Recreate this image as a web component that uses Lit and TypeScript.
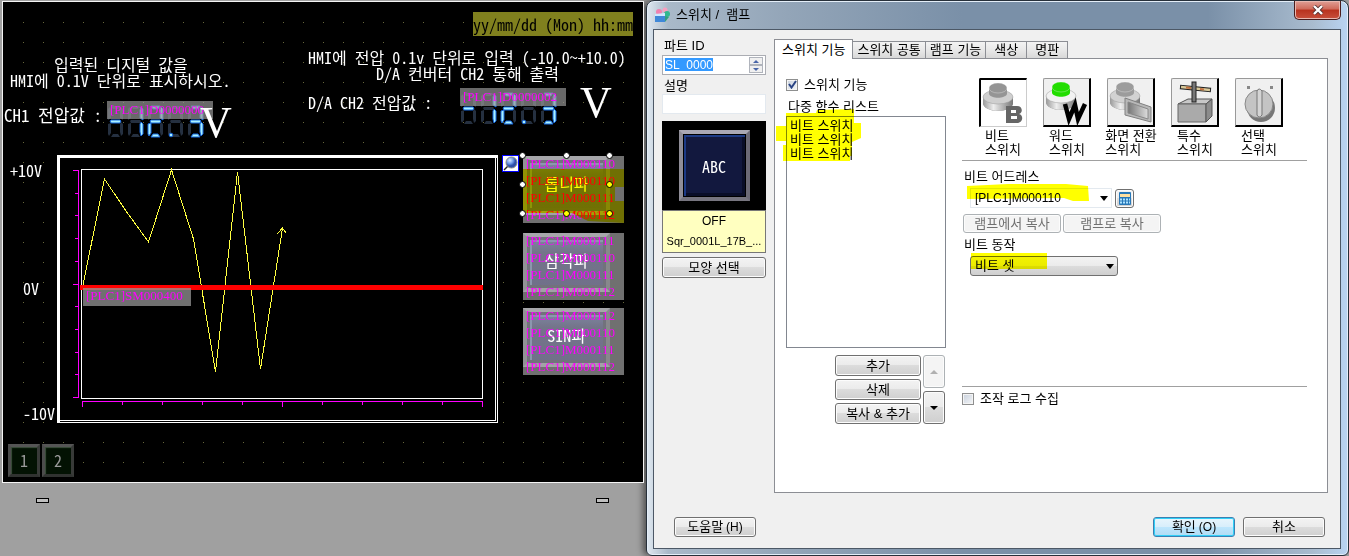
import { LitElement, html, svg, css } from "lit";
import { customElement, property } from "lit/decorators.js";

interface Label { text: string; x: number; y: number; kind: string; }

const LABELS: Label[] = [
  { text: "yy/mm/dd (Mon) hh:mm", x: 470, y: 10, kind: "date" },
  { text: "HMI에 전압 0.1v 단위로 입력 (-10.0~+10.0)", x: 305, y: 46, kind: "note" },
  { text: "D/A 컨버터 CH2 통해 출력", x: 373, y: 62, kind: "note" },
  { text: "D/A CH2 전압값 :", x: 305, y: 91, kind: "note" },
  { text: "입력된 디지털 값을", x: 51, y: 53, kind: "note" },
  { text: "HMI에 0.1V 단위로 표시하시오.", x: 7, y: 69, kind: "note" },
  { text: "CH1 전압값 :", x: 1, y: 97, kind: "channel" },
  { text: "+10V", x: 7, y: 152, kind: "axis" },
  { text: "0V", x: 20, y: 270, kind: "axis" },
  { text: "-10V", x: 20, y: 395, kind: "axis" },
  { text: "V", x: 197, y: 99, kind: "volt" },
  { text: "V", x: 577, y: 79, kind: "volt" },
];

const SEGMENTS = ["3,0 12,0 10,3 5,3", "13,1 15,3 15,14 12,12 12,4", "13,16 15,18 15,28 13,30 12,26 12,18",
  "5,28 10,28 12,31 3,31", "0,18 3,17 3,27 1,30 0,28", "0,3 2,1 3,4 3,12 0,14", "3,14 12,14 13,15 12,17 3,17 2,15"];
const DIGITS = [[6], [1, 2], [0, 1, 6, 4, 3], [], [0, 1, 2, 3, 6]];

@customElement("digit-readout")
class DigitReadout extends LitElement {
  @property() address = "";
  static styles = css`
    :host { display: block; position: relative; width: 106px; height: 37px; }
    svg { display: block; }
    .address { position: absolute; inset: 0 0 auto 0; height: 18px; box-sizing: border-box; padding-left: 3px;
      background: rgba(150, 150, 150, .7); color: #f0f; font: 13px/17px "Liberation Serif", serif; white-space: nowrap; }
  `;
  render() {
    return html`
      <svg width="106" height="37" aria-hidden="true">
        ${DIGITS.map((lit, i) => svg`<g transform="translate(${1 + i * 20} 5)">
          ${SEGMENTS.map((p, s) => svg`<polygon points=${p} fill=${lit.includes(s) ? "#a8f0ff" : "#253040"}
            stroke=${lit.includes(s) ? "#1668e0" : "none"} stroke-width="1"/>`)}</g>`)}
        <circle cx="64" cy="34" r="1.8" fill="#a8f0ff" stroke="#1668e0"/>
      </svg>
      <div class="address">${this.address}</div>`;
  }
}

const WAVES = [
  { name: "톱니파", y: 154, first: "[PLC1]M000110", selected: true },
  { name: "삼각파", y: 231, first: "[PLC1]M000111", selected: false },
  { name: "SIN파", y: 306, first: "[PLC1]M000112", selected: false },
];
const COMMON = ["[PLC1]M000110", "[PLC1]M000111", "[PLC1]M000112"];
const HANDLES = [[5, 5], [49, 5], [92, 5], [5, 34], [92, 34], [5, 63], [49, 63], [92, 63]];

@customElement("hmi-canvas")
class HmiCanvas extends LitElement {
  static styles = css`
    :host { display: block; background: #a0a0a0; padding: 1px 0 0 2px; overflow: hidden; }
    .screen { position: relative; width: 640px; height: 480px; border: 1px solid #f4f4f4; background: #000; }
    .scene { display: block; }
    .item { position: absolute; white-space: nowrap; color: #fff; }
    .note { font: 16px/18px "Noto Sans Mono CJK KR", "Liberation Mono", "Noto Sans CJK KR", monospace; }
    .channel { font: 17px/32px "Noto Sans Mono CJK KR", "Liberation Mono", "Noto Sans CJK KR", monospace; }
    .axis { font: 16px/32px "Noto Sans Mono CJK KR", "Liberation Mono", monospace; }
    .date { width: 160px; height: 24px; background: #80801e; color: #000; font: 16px/24px "Noto Sans Mono CJK KR", "Liberation Mono", monospace; }
    .volt { font: 44px/44px "Liberation Serif", serif; }
    .tag { height: 18px; padding: 0 8px 0 3px; background: rgba(150, 150, 150, .75); color: #f0f; font: 13px/16px "Liberation Serif", serif; }
    .page { width: 32px; height: 33px; box-sizing: border-box; padding: 0; border: 3px solid; border-color: #555 #383a38 #303230 #4c4c4c;
      background: #031203; box-shadow: inset 1px 1px 1px #3c503c; color: #999; font: 16px/25px "Noto Sans Mono CJK KR", "Liberation Mono", monospace; }
    .wave { position: absolute; width: 101px; height: 67px; padding: 0; border: 0; background: #707070; }
    .face { position: absolute; left: 0; top: 0; width: 87px; height: 59px; box-sizing: border-box; border: 4px solid;
      border-color: #a6a6aa #88888c #a2a2a6 #929296; background: linear-gradient(#7e88a4, #74748a 30%, #70708a);
      box-shadow: inset 0 0 0 3px #72727c, inset 5px 5px 0 #8c96ae; color: #fff;
      font: 16px/46px "Noto Sans Mono CJK KR", "Liberation Mono", "Noto Sans CJK KR", monospace; text-align: center; }
    .lines { position: absolute; left: 3px; top: -1px; color: #f0f; font: 13px/17px "Liberation Serif", serif; text-align: left; }
    .line { display: block; }
    .picked .face { color: #ff0; }
    .mark { position: absolute; left: -5px; top: -5px; overflow: visible; }
    .swipe { mix-blend-mode: multiply; }
    .lens { position: absolute; left: 499px; top: 153px; }
    .stub { display: block; width: 11px; height: 3px; border: 1px solid #000; background: #c0c0c0; }
    .stubs { display: flex; justify-content: space-between; width: 573px; padding: 15px 0 0 34px; }
  `;
  render() {
    const ticks = Array.from({ length: 11 }, (_, i) => i);
    return html`
      <div class="screen">
        <svg class="scene" width="640" height="480" shape-rendering="crispEdges" aria-hidden="true">
          <defs><pattern id="dots" width="20" height="20" patternUnits="userSpaceOnUse"><rect width="1" height="1" fill="#66663c"/></pattern></defs>
          <rect x="20" y="20" width="601" height="441" fill="url(#dots)"/>
          <rect x="54" y="153" width="441" height="268" fill="#fff"/>
          <rect x="57" y="156" width="437" height="264" fill="#000"/>
          <path d="M492.5 156V418.5H57" fill="none" stroke="#fff"/>
          <rect x="78.500" y="167.500" width="401" height="229" fill="none" stroke="#fff"/>
          <path d="M75.500 168V396M79 399.500H480" stroke="#f0f"/>
          ${ticks.map((i) => svg`
            <path d="M${i % 5 ? 72 : 70} ${Math.round(168 + i * 22.700) + 0.5}H75M${79.5 + i * 40} 399V${i % 5 ? 403 : 405}" stroke="#f0f"/>`)}
          <polyline points="80,283 101.500,177 123,209 145.500,240 168.500,168 190.500,237 212.500,370 234.500,170 257.500,367 279.500,226" fill="none" stroke="#ffff40"/>
          <path d="M274 232L279.500 226L283 231" fill="none" stroke="#ffff40"/>
          <rect x="77" y="283" width="403" height="5" fill="#f00"/>
        </svg>
        <digit-readout class="item" style="left:104px;top:99px" address="[PLC1]D0000000"></digit-readout>
        <digit-readout class="item" style="left:457px;top:86px" address="[PLC1]D0000002"></digit-readout>
        ${LABELS.map((l) => html`<div class="item ${l.kind}" style="left:${l.x}px;top:${l.y}px">${l.text}</div>`)}
        <div class="item tag" style="left:80px;top:286px">[PLC1]SM000400</div>
        ${["1", "2"].map((n, i) => html`<button class="item page" style="left:${5 + i * 34}px;top:442px">${n}</button>`)}
        ${WAVES.map((w) => html`
          <button class="wave ${w.selected ? "picked" : ""}" style="left:520px;top:${w.y}px">
            <span class="face">${w.name}</span>
            <span class="lines">${[w.first, ...COMMON].map((t) => html`<span class="line">${t}</span>`)}</span>
            ${w.selected ? html`
              <svg class="mark swipe" width="110" height="80"><path d="M5 18H106V72L70 70L54 62H5ZM97 36V50H106V36Z" fill="#ff0" fill-opacity=".98" fill-rule="evenodd"/></svg>
              <svg class="mark" width="110" height="80">${HANDLES.map(([x, y], i) => svg`
                <circle cx=${x - 0.5} cy=${y - 0.5} r="3" stroke="#000" fill=${[4, 6, 7].includes(i) ? "#ff0" : "#fff"}/>`)}</svg>` : ""}
          </button>`)}
        <svg class="lens" width="17" height="17" aria-hidden="true">
          <defs><radialGradient id="ball" cx=".35" cy=".3"><stop offset="0" stop-color="#dcecff"/><stop offset=".6" stop-color="#6f98e8"/><stop offset="1" stop-color="#2f4fa8"/></radialGradient></defs>
          <rect x=".5" y=".5" width="16" height="16" fill="#fff" stroke="#00f"/>
          <path d="M2 15L6 11" stroke="#222" stroke-width="1.500"/><circle cx="9.500" cy="7.500" r="5.500" fill="url(#ball)" stroke="#888"/>
        </svg>
      </div>
      <div class="stubs"><span class="stub"></span><span class="stub"></span></div>`;
  }
}

const button = (top: string, ring: string) => svg`
  <ellipse cx="17" cy="23" rx="15" ry="8" fill="#999"/><path d="M2 17V24C4 33 30 33 32 24V17Z" fill="url(#metal)"/>
  <ellipse cx="17" cy="17" rx="15" ry="7" fill=${ring} stroke="#999" stroke-width=".5"/>
  <path d="M8 9V14C10 19 24 19 26 14V9Z" fill=${top}/><ellipse cx="17" cy="8" rx="9" ry="5" fill=${top} stroke="#fff" stroke-opacity=".3"/>`;

const TOOLS = [
  { label: ["비트", "스위치"], on: true, art: svg`${button("#959595", "#cfcfcf")}<path fill-rule="evenodd" fill="#666" d="M25 26H36C42 26 42 33 38 34C43 35 42 43 36 43H25ZM30 30V33H35V30ZM30 36V39H36V36Z"/>` },
  { label: ["워드", "스위치"], on: false, art: svg`${button("#22dd00", "#f2f2f2")}<path fill="none" stroke="#000" stroke-width="4.500" d="M21 25L25 40L31 26L34 40L41 25"/>` },
  { label: ["화면 전환", "스위치"], on: false, art: svg`${button("#9c9c9c", "#d2d2d2")}<path d="M17 19L43 28V43L17 36Z" fill="#b8b8b8" stroke="#808080"/><path d="M20 23L40 30V40L20 34Z" fill="url(#glass)" stroke="#888"/>` },
  { label: ["특수", "스위치"], on: false, art: svg`<path d="M6 25L16 20H40L34 25Z" fill="#c8c8c8" stroke="#555"/><path d="M6 25H34V43H6Z" fill="#aaa" stroke="#666"/><path d="M34 25L40 20V37L34 43Z" fill="#8c8c8c" stroke="#555"/><path d="M8 8L39 11" stroke="#222" stroke-width="4.500"/><path d="M9 8L38 11" stroke="#d8c898" stroke-width="2.500"/><path d="M14 8.500L19 9M28 10L32 10.500" stroke="#c07040" stroke-width="2"/><rect x="20" y="3" width="4" height="20" fill="#777" stroke="#222"/>` },
  { label: ["선택", "스위치"], on: false, art: svg`<rect x="11" y="7" width="3" height="3" fill="#888"/><rect x="34" y="7" width="3" height="3" fill="#888"/><circle cx="25" cy="29" r="14" fill="#777"/><circle cx="23" cy="25" r="14" fill="#c4c4c4" stroke="#888"/><path d="M21 12Q23 8 26 12V36Q23 40 21 36Z" fill="#d4d4d4" stroke="#777"/>` },
];

@customElement("switch-dialog")
class SwitchDialog extends LitElement {
  static styles = css`
    :host { display: flex; flex-direction: column; box-sizing: border-box; min-width: 0; padding: 0 7px 6px 6px; border: 1px solid #27303a; border-radius: 8px 8px 6px 6px;
      background: linear-gradient(90deg, #dfe8f0 0, #a9b9c9 3%, #93a5b8 20%, #7a90a8 45%, #7a90a8 80%, #a9bccf 95%, #b9d4f2 100%);
      box-shadow: inset 0 0 0 1px #e4eef8, -3px 0 6px rgba(0, 0, 0, .5); color: #000;
      font: 13px/14px "Liberation Sans", "Noto Sans CJK KR", sans-serif; }
    * { box-sizing: border-box; }
    button, input, select { font: inherit; color: inherit; margin: 0; }
    svg { display: block; }
    .title { display: flex; align-items: center; gap: 6px; height: 28px; padding-left: 1px; }
    .title h1 { flex: 1; margin: 0; font: inherit; white-space: pre; }
    .close { align-self: flex-start; display: grid; place-items: center; width: 47px; height: 19px; padding: 0; border: 1px solid #4a1c1c; border-top: 0;
      border-radius: 0 0 5px 5px; background: linear-gradient(#e0a096, #cf6a5a 45%, #b8321e 50%, #c8503c); box-shadow: inset 0 0 0 1px #e8b8b0; }
    .client { flex: 1; display: flex; flex-direction: column; border: 1px solid #4c5866; background: #f0f0f0; padding: 9px 12px 11px 8px; }
    .main { flex: 1; display: flex; gap: 8px; min-height: 0; }
    .side { width: 104px; display: flex; flex-direction: column; }
    .side label { padding: 0 2px; }
    .field { width: 100%; height: 20px; margin: 2px 0 4px; padding: 0 2px; border: 1px solid #abadb3; background: #fff; }
    .spin { display: flex; align-items: center; font-size: 12px; }
    .spin input { flex: 1; min-width: 0; width: 10px; height: 18px; padding: 0; border: 0; background: linear-gradient(#39f, #39f) no-repeat 0 2px / 48px 13px; color: #fff; outline: 0; }
    .arrows { display: flex; flex-direction: column; }
    .arrows button { display: grid; place-items: center; width: 14px; height: 8px; padding: 0; border: 1px solid #b0b4bc; background: #f0f0f0; }
    .plain { border-color: #e3e9ef; margin: 1px 0 7px; }
    .preview { display: grid; place-items: center; height: 89px; background: #000; }
    .cap { display: grid; place-items: center; width: 71px; height: 71px; border: 4px solid; border-color: #aaa8b4 #6c6a76 #77757f #908e98; background: #12183e;
      box-shadow: inset 0 0 0 1px #000, inset 3px 3px 0 #1c3a86, inset -4px -4px 0 #0a0e28; color: #fff; font: 16px/20px "Noto Sans Mono CJK KR", "Liberation Mono", monospace; }
    .caption { height: 43px; border: 1px solid #777; background: #ffffc0; padding: 0 3px; text-align: center; font-size: 12px; line-height: 20px; white-space: nowrap; }
    .file { font-size: 11px; }
    .btn { display: flex; align-items: center; justify-content: center; gap: 3px; height: 21px; padding: 0 4px; border: 1px solid #707070; border-radius: 3px; white-space: nowrap;
      background: linear-gradient(#f3f3f3, #ebebeb 49%, #dcdcdc 50%, #cfcfcf); box-shadow: inset 0 0 0 1px #fcfcfc; }
    .btn:disabled { border-color: #adb2b5; background: #f4f4f4; color: #707070; }
    .shape { margin-top: 4px; }
    .tabs { flex: 1; min-width: 0; display: flex; flex-direction: column; }
    .strip { display: flex; align-items: flex-end; height: 19px; }
    .tab { min-width: 41px; height: 17px; padding: 0 4px; border: 1px solid #8c8e94; border-bottom: 0; border-left: 0; background: linear-gradient(#f3f3f3, #e8e8e8 50%, #d8d8d8); white-space: nowrap; }
    .tab.active { position: relative; height: 20px; margin-bottom: -1px; padding: 0 7px; border-left: 1px solid #8c8e94; background: #fff; }
    .panel { flex: 1; display: grid; grid-template-columns: 160px minmax(0, 1fr); gap: 16px; border: 1px solid #8c8e94; background: #fff; padding: 19px 20px 12px 11px; }
    .check { position: relative; display: flex; align-items: center; gap: 6px; }
    .check input { appearance: none; width: 12px; height: 12px; border: 1px solid #8e8f8f; background: linear-gradient(135deg, #c8d0dc, #f4f6f8); box-shadow: inset 0 0 0 1px #f4f4f4; }
    .tick { position: absolute; left: 2px; top: 2px; pointer-events: none; }
    .caps { display: block; margin: 8px 0 2px; padding-left: 2px; }
    .listwrap { position: relative; }
    .list { display: block; width: 100%; height: 232px; padding: 0 2px; border: 1px solid #828790; border-radius: 0; background: #fff; overflow: hidden; outline: 0; }
    .list option { display: flex; align-items: center; min-height: 14px; height: 14px; padding: 0 1px; line-height: 14px; }
    .glow { position: absolute; mix-blend-mode: multiply; pointer-events: none; }
    .onlist { left: -10px; top: -7px; }
    .ops { display: flex; justify-content: flex-end; gap: 2px; margin: 7px 1px 0 0; }
    .stack { display: grid; gap: 3px; }
    .stack .btn { width: 86px; }
    .moves { display: grid; gap: 3px; }
    .moves .btn { width: 22px; height: 33px; padding: 0; }
    .tools { display: flex; margin-left: 9px; }
    .tool { display: flex; flex-direction: column; align-items: center; width: 64px; gap: 2px; }
    .tool button { width: 48px; height: 49px; padding: 0; border: 1px solid #999; border-right: 2px solid #000; border-bottom: 2px solid #000; border-radius: 2px 0 0 0; background: #f0f0f0; }
    .tool .down { border: 1px solid #ccc; border-left: 2px solid #000; border-top: 2px solid #000; background: #fff; }
    .tool label { height: 28px; white-space: nowrap; }
    .rule { height: 1px; border: 0; margin: 3px 0 0; background: #a0a0a0; }
    .form { padding: 9px 0 0 1px; }
    .form > label { display: block; padding-left: 1px; }
    .address { display: flex; align-items: center; gap: 3px; margin: 4px 0 6px 7px; }
    .combo { position: relative; width: 142px; font-size: 12px; }
    .combo select { appearance: none; display: block; width: 100%; height: 20px; padding: 0 4px; border: 1px solid #e3e9ef; background: #fff; outline: 0; }
    .combo .drop { border: 1px solid #707070; border-radius: 3px; background: linear-gradient(#f3f3f3, #ebebeb 49%, #dcdcdc 50%, #cfcfcf); }
    .arrow { position: absolute; right: 4px; top: 8px; pointer-events: none; }
    .onaddr { left: -4px; top: -7px; }
    .calc { width: 19px; height: 19px; padding: 0; }
    .copy { display: flex; gap: 2px; margin-bottom: 5px; }
    .copy .btn { width: 98px; height: 19px; }
    .action { width: 148px; margin: 4px 0 0 7px; font-size: 13px; }
    .onact { left: 1px; top: -3px; }
    .low { margin: 110px 0 5px; }
    .footer { display: flex; gap: 8px; padding: 24px 3px 0 12px; }
    .footer .btn { width: 82px; height: 20px; }
    .help { margin-right: auto; }
    .footer .ok { border-color: #3c7fb1; background: linear-gradient(#e8f5fc, #d8eefb 49%, #bee6fd 50%, #b0dcf4); box-shadow: inset 0 0 0 1px #30d0f8; }
    .key { font-size: 12px; }
  `;
  render() {
    return html`
      <header class="title">
        <svg width="16" height="16" aria-hidden="true"><circle cx="5" cy="5" r="3" fill="#f080b0"/><circle cx="11" cy="3" r="2.500" fill="#f8a0c0"/><circle cx="13" cy="7" r="3" fill="#30b890"/><path d="M1 7L11 6V15H1Z" fill="#d0e8ff"/><rect x="1" y="9" width="10" height="6" fill="#3f88d8"/><path d="M11 9L15 10L11 15Z" fill="#30a080"/></svg>
        <h1>스위치 /  램프</h1>
        <button class="close" aria-label="Close"><svg width="12" height="10"><path d="M2 1L10 9M10 1L2 9" stroke="#533" stroke-width="4"/><path d="M2 1L10 9M10 1L2 9" stroke="#fff" stroke-width="2.400"/></svg></button>
      </header>
      <div class="client">
        <div class="main">
          <div class="side">
            <label for="part">파트 ID</label>
            <div class="field spin"><input id="part" value="SL_0000" />
              <span class="arrows">
                <button aria-label="Up"><svg width="6" height="3"><path d="M0 3L3 0L6 3Z" fill="#4a66a8"/></svg></button>
                <button aria-label="Down"><svg width="6" height="3"><path d="M0 0L3 3L6 0Z" fill="#4a66a8"/></svg></button>
              </span></div>
            <label for="note">설명</label>
            <input id="note" class="field plain" />
            <div class="preview"><div class="cap">ABC</div></div>
            <div class="caption">OFF<br /><span class="file">Sqr_0001L_17B_...</span></div>
            <button class="btn shape">모양 선택</button>
          </div>
          <div class="tabs">
            <div class="strip" role="tablist">
              ${["스위치 기능", "스위치 공통", "램프 기능", "색상", "명판"].map((t, i) => html`<button role="tab" class="tab ${i ? "" : "active"}">${t}</button>`)}
            </div>
            <div class="panel">
              <section>
                <label class="check"><input type="checkbox" checked />스위치 기능
                  <svg class="tick" width="9" height="9"><path d="M1 4L3.500 7.500L8 1" fill="none" stroke="#2a4484" stroke-width="2"/></svg></label>
                <label class="caps" for="funcs">다중 함수 리스트</label>
                <div class="listwrap">
                  <select id="funcs" class="list" size="16"><option>비트 스위치</option><option>비트 스위치</option><option>비트 스위치</option></select>
                  <svg class="glow onlist" width="90" height="54"><path d="M10 4L40 4L41 1L78 0V14H85V29L76 33V47H74V52H7V36H10V32H0V17H10Z" fill="#ff0"/></svg>
                </div>
                <div class="ops">
                  <div class="stack"><button class="btn">추가</button><button class="btn">삭제</button><button class="btn">복사 &amp; 추가</button></div>
                  <div class="moves">
                    <button class="btn" disabled aria-label="Move up"><svg width="8" height="4"><path d="M0 4L4 0L8 4Z" fill="#b0b0b0"/></svg></button>
                    <button class="btn" aria-label="Move down"><svg width="8" height="4"><path d="M0 0L4 4L8 0Z"/></svg></button>
                  </div>
                </div>
              </section>
              <section>
                <div class="tools">
                  ${TOOLS.map((t, i) => html`<div class="tool">
                    <button id="tool${i}" class=${t.on ? "down" : ""}><svg width="45" height="46"><defs>
                      <linearGradient id="metal"><stop offset="0" stop-color="#999"/><stop offset=".35" stop-color="#eee"/><stop offset="1" stop-color="#777"/></linearGradient>
                      <linearGradient id="glass"><stop offset="0" stop-color="#777"/><stop offset="1" stop-color="#ddd"/></linearGradient></defs>${t.art}</svg></button>
                    <label for="tool${i}">${t.label[0]}<br />${t.label[1]}</label></div>`)}
                </div>
                <hr class="rule" />
                <div class="form">
                  <label for="addr">비트 어드레스</label>
                  <div class="address">
                    <div class="combo"><select id="addr"><option>[PLC1]M000110</option></select>
                      <svg class="arrow" width="8" height="5"><path d="M0 0L4 5L8 0Z"/></svg>
                      <svg class="glow onaddr" width="126" height="24"><path d="M1 5L42 3L100 3L122 5L123 20L107 20L98 17L1 18Z" fill="#ff0"/></svg></div>
                    <button class="btn calc" aria-label="Address"><svg width="14" height="13"><rect x="1" y="0" width="12" height="13" rx="1" fill="#2878b8"/><rect x="2" y="2" width="10" height="3" fill="#ffe0a0"/><path d="M2 7.500H12M2 10.500H12" stroke="#b0e4ff" stroke-width="2" stroke-dasharray="2 1"/></svg></button>
                  </div>
                  <div class="copy"><button class="btn" disabled>램프에서 복사</button><button class="btn" disabled>램프로 복사</button></div>
                  <label for="act">비트 동작</label>
                  <div class="combo action"><select id="act" class="drop"><option>비트 셋</option></select>
                    <svg class="arrow" width="8" height="5"><path d="M0 0L4 5L8 0Z"/></svg>
                    <svg class="glow onact" width="76" height="16"><rect width="76" height="16" fill="#ff0"/></svg></div>
                </div>
                <hr class="rule low" />
                <label class="check"><input type="checkbox" />조작 로그 수집</label>
              </section>
            </div>
          </div>
        </div>
        <footer class="footer"><button class="btn help">도움말 <span class="key">(H)</span></button><button class="btn ok">확인 <span class="key">(O)</span></button><button class="btn">취소</button></footer>
      </div>`;
  }
}

@customElement("app-root")
class AppRoot extends LitElement {
  static styles = css`
    :host { display: grid; grid-template-columns: 646px minmax(0, 1fr); min-height: 100vh; background: #a0a0a0; }
  `;
  render() {
    return html`<hmi-canvas></hmi-canvas><switch-dialog></switch-dialog>`;
  }
}
